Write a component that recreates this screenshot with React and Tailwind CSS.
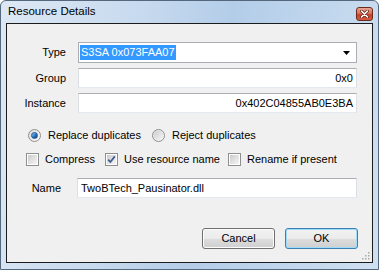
import React from "react";

const FONT = "[font-family:'Liberation_Sans',Arial,sans-serif]";

function TextBox({ children, className = "" }) {
  return (
    <div
      className={`h-[20px] flex items-center border border-[#abadb3] border-l-[#dbdfe6] border-r-[#dbdfe6] border-b-[#e3e9ef] bg-white px-[3px] text-[11px] text-black ${className}`}
    >
      {children}
    </div>
  );
}

function Radio({ checked }) {
  return (
    <span className="w-[13px] h-[13px] rounded-full border border-[#8e8f8f] bg-gradient-to-br from-[#dcdcdc] to-[#fbfbfb] flex items-center justify-center shrink-0">
      {checked ? (
        <span className="w-[7px] h-[7px] rounded-full bg-gradient-to-br from-[#96d1f8] via-[#2b7ccb] to-[#0b3f7a] border border-[#20558e]" />
      ) : (
        <span className="w-[9px] h-[9px] rounded-full bg-gradient-to-br from-[#cfcfcf] to-[#f4f4f4]" />
      )}
    </span>
  );
}

function Check({ checked }) {
  return (
    <span className="w-[13px] h-[13px] border border-[#8e8f8f] bg-white flex items-center justify-center shrink-0">
      <span className="w-[9px] h-[9px] bg-gradient-to-br from-[#cbcbcb] to-[#f6f6f6] flex items-center justify-center">
        {checked && (
          <svg width="9" height="9" viewBox="0 0 9 9">
            <path d="M1.2 4.6 L3.4 7 L7.8 1.4" fill="none" stroke="#3e5a8e" strokeWidth="1.7" />
          </svg>
        )}
      </span>
    </span>
  );
}

function Button({ children, isDefault }) {
  return (
    <button
      className={`w-[73px] h-[21px] rounded-[3px] border text-[11px] text-black ${
        isDefault
          ? "border-[#3c7fb1] shadow-[inset_0_0_0_1px_#9fdcf7]"
          : "border-[#707070] shadow-[inset_0_0_0_1px_#fcfcfc]"
      } bg-[linear-gradient(#f2f2f2_0%,#ebebeb_50%,#dddddd_51%,#cfcfcf_100%)]`}
    >
      {children}
    </button>
  );
}

export default function App() {
  return (
    <div
      className={`w-[379px] h-[270px] border border-[#55677c] rounded-t-[6px] bg-[linear-gradient(100deg,#dde8f4_0%,#c6d9ee_35%,#b3cde9_55%,#cfe0f1_100%)] flex flex-col ${FONT}`}
    >
      <div className="h-[22px] flex items-center justify-between pl-[7px] pr-[5px]">
        <span className="text-[11.5px] text-black">Resource Details</span>
        <span className="w-[17px] h-[14px] mt-[4px] rounded-[3px] border border-[#6d2a1c] bg-[linear-gradient(#eaa592_0%,#d8715a_45%,#c5432a_55%,#d35a3c_100%)] flex items-center justify-center">
          <svg width="9" height="8" viewBox="0 0 9 8">
            <path d="M1.5 1 L7.5 7 M7.5 1 L1.5 7" stroke="#5a2418" strokeWidth="3" strokeLinecap="round" />
            <path d="M1.5 1 L7.5 7 M7.5 1 L1.5 7" stroke="#ffffff" strokeWidth="1.6" strokeLinecap="round" />
          </svg>
        </span>
      </div>

      <div className="relative flex-1 mx-[5px] mb-[6px] border border-[#1c1c1c] bg-[#f0f0f0] flex flex-col pt-[18px] text-[11px] text-black">
        <div className="grid grid-cols-[59px_1fr] gap-x-[12px] gap-y-[5px] items-center pr-[15px]">
          <span className="text-right">Type</span>
          <div className="h-[21px] flex items-center border border-[#abadb3] bg-white pl-[1px] pr-[6px]">
            <span className="bg-[#3399ff] text-white leading-[15px] px-[1px]">S3SA 0x073FAA07</span>
            <span className="flex-1" />
            <svg width="7" height="4" viewBox="0 0 7 4">
              <path d="M0 0 H7 L3.5 4 Z" fill="#000" />
            </svg>
          </div>

          <span className="text-right">Group</span>
          <TextBox className="justify-end">0x0</TextBox>

          <span className="text-right">Instance</span>
          <TextBox className="justify-end">0x402C04855AB0E3BA</TextBox>
        </div>

        <div className="h-[16px] mt-[14px] flex items-center pl-[21px]">
          <label className="w-[124px] flex items-center gap-[7px]">
            <Radio checked />
            <span>Replace duplicates</span>
          </label>
          <label className="flex items-center gap-[7px]">
            <Radio />
            <span>Reject duplicates</span>
          </label>
        </div>

        <div className="h-[16px] mt-[8px] flex items-center pl-[19px]">
          <label className="w-[79px] flex items-center gap-[6px]">
            <Check />
            <span>Compress</span>
          </label>
          <label className="w-[123px] flex items-center gap-[6px]">
            <Check checked />
            <span>Use resource name</span>
          </label>
          <label className="flex items-center gap-[6px]">
            <Check />
            <span>Rename if present</span>
          </label>
        </div>

        <div className="grid grid-cols-[59px_1fr] gap-x-[11px] items-center pr-[15px] mt-[11px]">
          <span className="text-right pr-[5px]">Name</span>
          <TextBox>TwoBTech_Pausinator.dll</TextBox>
        </div>

        <div className="mt-[30px] flex justify-end gap-[10px] pr-[14px]">
          <Button>Cancel</Button>
          <Button isDefault>OK</Button>
        </div>

        <svg className="absolute right-[2px] bottom-[2px]" width="10" height="10" viewBox="0 0 10 10">
          {[[8, 2], [8, 5], [5, 5], [8, 8], [5, 8], [2, 8]].map(([x, y], i) => (
            <rect key={i} x={x} y={y} width="1.5" height="1.5" fill="#a9a9a9" />
          ))}
        </svg>
      </div>
    </div>
  );
}
